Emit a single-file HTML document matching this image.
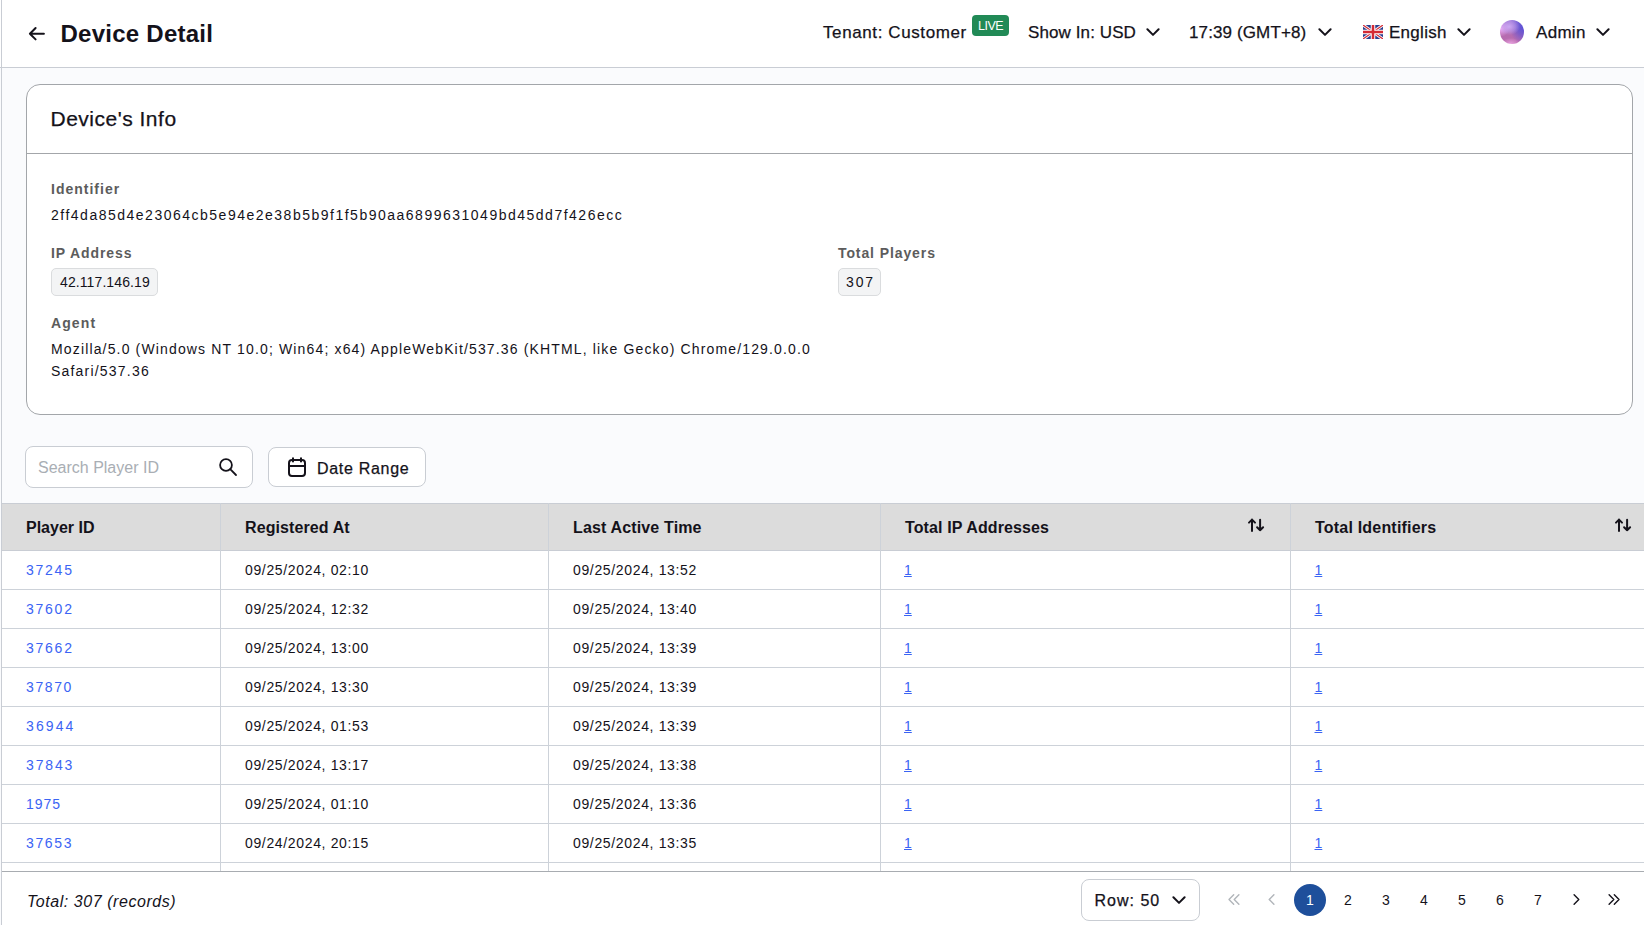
<!DOCTYPE html>
<html><head><meta charset="utf-8"><title>Device Detail</title>
<style>
html,body{margin:0;padding:0;width:1644px;height:925px;overflow:hidden;background:#fff;position:relative}
.t{position:absolute;white-space:nowrap;line-height:1;font-family:"Liberation Sans",sans-serif}
svg{display:block}
</style></head><body>
<div style="position:absolute;left:0px;top:0px;width:1644px;height:67px;background:#fff"></div>
<div style="position:absolute;left:0px;top:67px;width:1644px;height:1px;background:#c9cdd4"></div>
<svg style="position:absolute;left:27px;top:25px" width="20" height="18" viewBox="0 0 20 18"><path d="M16.9 8.7 H2.9 M8.6 3 L2.9 8.7 L8.6 14.4" fill="none" stroke="#14121a" stroke-width="2" stroke-linecap="round" stroke-linejoin="round"/></svg>
<div class="t" style="left:60.5px;top:21.68px;font-size:24px;font-weight:bold;color:#14121a;letter-spacing:0.25px;font-style:normal;">Device Detail</div>
<div class="t" style="left:823px;top:23.61px;font-size:17px;font-weight:normal;color:#14121a;letter-spacing:0.6px;font-style:normal;-webkit-text-stroke:0.25px currentColor;">Tenant: Customer</div>
<div style="position:absolute;left:972px;top:15px;width:37px;height:21px;background:#218a56;border-radius:4px"></div>
<div class="t" style="left:978px;top:20.42px;font-size:12.5px;font-weight:normal;color:#fff;letter-spacing:-0.5px;font-style:normal;">LIVE</div>
<div class="t" style="left:1028px;top:23.61px;font-size:17px;font-weight:normal;color:#14121a;letter-spacing:0.1px;font-style:normal;-webkit-text-stroke:0.25px currentColor;">Show In: USD</div>
<svg style="position:absolute;left:1146px;top:28px" width="14" height="9" viewBox="0 0 14 9"><path d="M1.4 1.3 L7 6.9 L12.6 1.3" fill="none" stroke="#14121a" stroke-width="2" stroke-linecap="round" stroke-linejoin="round"/></svg>
<div class="t" style="left:1189px;top:23.61px;font-size:17px;font-weight:normal;color:#14121a;letter-spacing:0.12px;font-style:normal;-webkit-text-stroke:0.25px currentColor;">17:39 (GMT+8)</div>
<svg style="position:absolute;left:1318px;top:28px" width="14" height="9" viewBox="0 0 14 9"><path d="M1.4 1.3 L7 6.9 L12.6 1.3" fill="none" stroke="#14121a" stroke-width="2" stroke-linecap="round" stroke-linejoin="round"/></svg>
<svg style="position:absolute;left:1363px;top:25px" width="20" height="14" viewBox="0 0 20 14"><rect width="20" height="14" fill="#2a3f8f"/>
<path d="M0 0 L20 14 M20 0 L0 14" stroke="#fff" stroke-width="3"/>
<path d="M0 0 L20 14 M20 0 L0 14" stroke="#d42a34" stroke-width="1.2"/>
<path d="M10 0 V14 M0 7 H20" stroke="#fff" stroke-width="4.5"/>
<path d="M10 0 V14 M0 7 H20" stroke="#d42a34" stroke-width="2.5"/></svg>
<div class="t" style="left:1389px;top:23.61px;font-size:17px;font-weight:normal;color:#14121a;letter-spacing:0.28px;font-style:normal;-webkit-text-stroke:0.25px currentColor;">English</div>
<svg style="position:absolute;left:1457px;top:28px" width="14" height="9" viewBox="0 0 14 9"><path d="M1.4 1.3 L7 6.9 L12.6 1.3" fill="none" stroke="#14121a" stroke-width="2" stroke-linecap="round" stroke-linejoin="round"/></svg>
<div style="position:absolute;left:1500px;top:20px;width:24px;height:24px;border-radius:50%;background:radial-gradient(ellipse 45% 35% at 38% 28%, rgba(205,170,245,0.95) 0%, rgba(195,160,240,0.5) 60%, transparent 100%), radial-gradient(circle at 5% 35%, #f4b0f6 0, rgba(244,176,246,0) 30%), radial-gradient(ellipse 60% 70% at 100% 30%, #5850d8 0%, rgba(88,80,216,0.6) 50%, rgba(88,80,216,0) 100%), radial-gradient(ellipse 40% 25% at 45% 100%, #e8a4e0 0%, rgba(232,164,224,0) 100%), linear-gradient(180deg, #9c78d8 0%, #b46cb0 55%, #bc6cb0 100%)"></div>
<div class="t" style="left:1536px;top:23.61px;font-size:17px;font-weight:normal;color:#14121a;letter-spacing:0.3px;font-style:normal;-webkit-text-stroke:0.25px currentColor;">Admin</div>
<svg style="position:absolute;left:1596px;top:28px" width="14" height="9" viewBox="0 0 14 9"><path d="M1.4 1.3 L7 6.9 L12.6 1.3" fill="none" stroke="#14121a" stroke-width="2" stroke-linecap="round" stroke-linejoin="round"/></svg>
<div style="position:absolute;left:0px;top:68px;width:1644px;height:857px;background:#fafbfd"></div>
<div style="position:absolute;left:1px;top:0px;width:1px;height:925px;background:#c9cdd4"></div>
<div style="position:absolute;left:26px;top:84px;width:1607px;height:331px;box-sizing:border-box;border:1px solid #a3a6aa;border-radius:14px;background:#fff"></div>
<div style="position:absolute;left:27px;top:153px;width:1605px;height:1px;background:#a3a6aa"></div>
<div class="t" style="left:50.5px;top:108.22px;font-size:21px;font-weight:normal;color:#14121a;letter-spacing:0.5px;font-style:normal;-webkit-text-stroke:0.25px currentColor;">Device's Info</div>
<div class="t" style="left:51px;top:182.15px;font-size:14px;font-weight:bold;color:#5c5c5c;letter-spacing:1.0px;font-style:normal;">Identifier</div>
<div class="t" style="left:51px;top:208.15px;font-size:14px;font-weight:normal;color:#14121a;letter-spacing:1.5px;font-style:normal;">2ff4da85d4e23064cb5e94e2e38b5b9f1f5b90aa6899631049bd45dd7f426ecc</div>
<div class="t" style="left:51px;top:246.15px;font-size:14px;font-weight:bold;color:#5c5c5c;letter-spacing:0.9px;font-style:normal;">IP Address</div>
<div style="position:absolute;left:51px;top:268px;width:107px;height:28px;box-sizing:border-box;border:1px solid #dadcde;border-radius:5px;background:#f3f4f5"></div>
<div class="t" style="left:60px;top:275.15px;font-size:14px;font-weight:normal;color:#14121a;letter-spacing:0.1px;font-style:normal;">42.117.146.19</div>
<div class="t" style="left:838px;top:246.15px;font-size:14px;font-weight:bold;color:#5c5c5c;letter-spacing:0.9px;font-style:normal;">Total Players</div>
<div style="position:absolute;left:838px;top:268px;width:43px;height:28px;box-sizing:border-box;border:1px solid #dadcde;border-radius:5px;background:#f3f4f5"></div>
<div class="t" style="left:846px;top:275.15px;font-size:14px;font-weight:normal;color:#14121a;letter-spacing:1.9px;font-style:normal;">307</div>
<div class="t" style="left:51px;top:316.15px;font-size:14px;font-weight:bold;color:#5c5c5c;letter-spacing:1.1px;font-style:normal;">Agent</div>
<div class="t" style="left:51px;top:342.15px;font-size:14px;font-weight:normal;color:#14121a;letter-spacing:1.15px;font-style:normal;">Mozilla/5.0 (Windows NT 10.0; Win64; x64) AppleWebKit/537.36 (KHTML, like Gecko) Chrome/129.0.0.0</div>
<div class="t" style="left:51px;top:364.15px;font-size:14px;font-weight:normal;color:#14121a;letter-spacing:1.2px;font-style:normal;">Safari/537.36</div>
<div style="position:absolute;left:25px;top:446px;width:228px;height:42px;box-sizing:border-box;border:1px solid #c9cdd3;border-radius:8px;background:#fff"></div>
<div class="t" style="left:38px;top:459.96px;font-size:16px;font-weight:normal;color:#a9aeb4;letter-spacing:0px;font-style:normal;">Search Player ID</div>
<svg style="position:absolute;left:217px;top:456px" width="22" height="22" viewBox="0 0 22 22"><circle cx="9" cy="9" r="5.9" fill="none" stroke="#14121a" stroke-width="1.8"/><path d="M13.2 13.2 L19 19" stroke="#14121a" stroke-width="1.8" stroke-linecap="round"/></svg>
<div style="position:absolute;left:268px;top:447px;width:158px;height:40px;box-sizing:border-box;border:1px solid #c9cdd3;border-radius:8px;background:#fff"></div>
<svg style="position:absolute;left:286px;top:455px" width="22" height="24" viewBox="0 0 22 24"><rect x="3" y="5" width="16" height="16" rx="3" fill="none" stroke="#14121a" stroke-width="2"/><path d="M3 11 H19 M7 3.2 V6.5 M15 3.2 V6.5" stroke="#14121a" stroke-width="2" stroke-linecap="round"/></svg>
<div class="t" style="left:317px;top:460.96px;font-size:16px;font-weight:normal;color:#14121a;letter-spacing:0.7px;font-style:normal;-webkit-text-stroke:0.25px currentColor;">Date Range</div>
<div style="position:absolute;left:2px;top:503px;width:1642px;height:47px;background:#dcdcdc"></div>
<div style="position:absolute;left:2px;top:503px;width:1642px;height:1px;background:#c9cdd4"></div>
<div style="position:absolute;left:2px;top:550px;width:1642px;height:1px;background:#c9cdd4"></div>
<div style="position:absolute;left:220px;top:503px;width:1px;height:368px;background:#cdd2d9"></div>
<div style="position:absolute;left:548px;top:503px;width:1px;height:368px;background:#cdd2d9"></div>
<div style="position:absolute;left:880px;top:503px;width:1px;height:368px;background:#cdd2d9"></div>
<div style="position:absolute;left:1290px;top:503px;width:1px;height:368px;background:#cdd2d9"></div>
<div class="t" style="left:26px;top:520.46px;font-size:16px;font-weight:bold;color:#14121a;letter-spacing:0px;font-style:normal;">Player ID</div>
<div class="t" style="left:245px;top:520.46px;font-size:16px;font-weight:bold;color:#14121a;letter-spacing:0.1px;font-style:normal;">Registered At</div>
<div class="t" style="left:573px;top:520.46px;font-size:16px;font-weight:bold;color:#14121a;letter-spacing:0.15px;font-style:normal;">Last Active Time</div>
<div class="t" style="left:905px;top:520.46px;font-size:16px;font-weight:bold;color:#14121a;letter-spacing:0.12px;font-style:normal;">Total IP Addresses</div>
<div class="t" style="left:1315px;top:520.46px;font-size:16px;font-weight:bold;color:#14121a;letter-spacing:0.2px;font-style:normal;">Total Identifiers</div>
<svg style="position:absolute;left:1247px;top:517.5px" width="18" height="15" viewBox="0 0 18 15"><path d="M5 12.9 V1.6 M2 4.6 L5 1.6 L8 4.6 M13.1 1.8 V12.3 M10.1 9.3 L13.1 12.3 L16.1 9.3" fill="none" stroke="#14121a" stroke-width="2" stroke-linecap="round" stroke-linejoin="round"/></svg>
<svg style="position:absolute;left:1614px;top:517.5px" width="18" height="15" viewBox="0 0 18 15"><path d="M5 12.9 V1.6 M2 4.6 L5 1.6 L8 4.6 M13.1 1.8 V12.3 M10.1 9.3 L13.1 12.3 L16.1 9.3" fill="none" stroke="#14121a" stroke-width="2" stroke-linecap="round" stroke-linejoin="round"/></svg>
<div style="position:absolute;left:2px;top:551px;width:1642px;height:38px;background:#fff"></div>
<div style="position:absolute;left:2px;top:589px;width:1642px;height:1px;background:#cdd2d9"></div>
<div class="t" style="left:26px;top:563.15px;font-size:14px;font-weight:normal;color:#3b64f4;letter-spacing:1.75px;font-style:normal;">37245</div>
<div class="t" style="left:245px;top:563.15px;font-size:14px;font-weight:normal;color:#14121a;letter-spacing:0.65px;font-style:normal;">09/25/2024, 02:10</div>
<div class="t" style="left:573px;top:563.15px;font-size:14px;font-weight:normal;color:#14121a;letter-spacing:0.65px;font-style:normal;">09/25/2024, 13:52</div>
<div class="t" style="left:904px;top:563.15px;font-size:14px;font-weight:normal;color:#3b64f4;letter-spacing:0px;font-style:normal;text-decoration:underline;">1</div>
<div class="t" style="left:1314.5px;top:563.15px;font-size:14px;font-weight:normal;color:#3b64f4;letter-spacing:0px;font-style:normal;text-decoration:underline;">1</div>
<div style="position:absolute;left:2px;top:590px;width:1642px;height:38px;background:#fff"></div>
<div style="position:absolute;left:2px;top:628px;width:1642px;height:1px;background:#cdd2d9"></div>
<div class="t" style="left:26px;top:602.15px;font-size:14px;font-weight:normal;color:#3b64f4;letter-spacing:1.75px;font-style:normal;">37602</div>
<div class="t" style="left:245px;top:602.15px;font-size:14px;font-weight:normal;color:#14121a;letter-spacing:0.65px;font-style:normal;">09/25/2024, 12:32</div>
<div class="t" style="left:573px;top:602.15px;font-size:14px;font-weight:normal;color:#14121a;letter-spacing:0.65px;font-style:normal;">09/25/2024, 13:40</div>
<div class="t" style="left:904px;top:602.15px;font-size:14px;font-weight:normal;color:#3b64f4;letter-spacing:0px;font-style:normal;text-decoration:underline;">1</div>
<div class="t" style="left:1314.5px;top:602.15px;font-size:14px;font-weight:normal;color:#3b64f4;letter-spacing:0px;font-style:normal;text-decoration:underline;">1</div>
<div style="position:absolute;left:2px;top:629px;width:1642px;height:38px;background:#fff"></div>
<div style="position:absolute;left:2px;top:667px;width:1642px;height:1px;background:#cdd2d9"></div>
<div class="t" style="left:26px;top:641.15px;font-size:14px;font-weight:normal;color:#3b64f4;letter-spacing:1.75px;font-style:normal;">37662</div>
<div class="t" style="left:245px;top:641.15px;font-size:14px;font-weight:normal;color:#14121a;letter-spacing:0.65px;font-style:normal;">09/25/2024, 13:00</div>
<div class="t" style="left:573px;top:641.15px;font-size:14px;font-weight:normal;color:#14121a;letter-spacing:0.65px;font-style:normal;">09/25/2024, 13:39</div>
<div class="t" style="left:904px;top:641.15px;font-size:14px;font-weight:normal;color:#3b64f4;letter-spacing:0px;font-style:normal;text-decoration:underline;">1</div>
<div class="t" style="left:1314.5px;top:641.15px;font-size:14px;font-weight:normal;color:#3b64f4;letter-spacing:0px;font-style:normal;text-decoration:underline;">1</div>
<div style="position:absolute;left:2px;top:668px;width:1642px;height:38px;background:#fff"></div>
<div style="position:absolute;left:2px;top:706px;width:1642px;height:1px;background:#cdd2d9"></div>
<div class="t" style="left:26px;top:680.15px;font-size:14px;font-weight:normal;color:#3b64f4;letter-spacing:1.6px;font-style:normal;">37870</div>
<div class="t" style="left:245px;top:680.15px;font-size:14px;font-weight:normal;color:#14121a;letter-spacing:0.65px;font-style:normal;">09/25/2024, 13:30</div>
<div class="t" style="left:573px;top:680.15px;font-size:14px;font-weight:normal;color:#14121a;letter-spacing:0.65px;font-style:normal;">09/25/2024, 13:39</div>
<div class="t" style="left:904px;top:680.15px;font-size:14px;font-weight:normal;color:#3b64f4;letter-spacing:0px;font-style:normal;text-decoration:underline;">1</div>
<div class="t" style="left:1314.5px;top:680.15px;font-size:14px;font-weight:normal;color:#3b64f4;letter-spacing:0px;font-style:normal;text-decoration:underline;">1</div>
<div style="position:absolute;left:2px;top:707px;width:1642px;height:38px;background:#fff"></div>
<div style="position:absolute;left:2px;top:745px;width:1642px;height:1px;background:#cdd2d9"></div>
<div class="t" style="left:26px;top:719.15px;font-size:14px;font-weight:normal;color:#3b64f4;letter-spacing:2.1px;font-style:normal;">36944</div>
<div class="t" style="left:245px;top:719.15px;font-size:14px;font-weight:normal;color:#14121a;letter-spacing:0.65px;font-style:normal;">09/25/2024, 01:53</div>
<div class="t" style="left:573px;top:719.15px;font-size:14px;font-weight:normal;color:#14121a;letter-spacing:0.65px;font-style:normal;">09/25/2024, 13:39</div>
<div class="t" style="left:904px;top:719.15px;font-size:14px;font-weight:normal;color:#3b64f4;letter-spacing:0px;font-style:normal;text-decoration:underline;">1</div>
<div class="t" style="left:1314.5px;top:719.15px;font-size:14px;font-weight:normal;color:#3b64f4;letter-spacing:0px;font-style:normal;text-decoration:underline;">1</div>
<div style="position:absolute;left:2px;top:746px;width:1642px;height:38px;background:#fff"></div>
<div style="position:absolute;left:2px;top:784px;width:1642px;height:1px;background:#cdd2d9"></div>
<div class="t" style="left:26px;top:758.15px;font-size:14px;font-weight:normal;color:#3b64f4;letter-spacing:1.85px;font-style:normal;">37843</div>
<div class="t" style="left:245px;top:758.15px;font-size:14px;font-weight:normal;color:#14121a;letter-spacing:0.65px;font-style:normal;">09/25/2024, 13:17</div>
<div class="t" style="left:573px;top:758.15px;font-size:14px;font-weight:normal;color:#14121a;letter-spacing:0.65px;font-style:normal;">09/25/2024, 13:38</div>
<div class="t" style="left:904px;top:758.15px;font-size:14px;font-weight:normal;color:#3b64f4;letter-spacing:0px;font-style:normal;text-decoration:underline;">1</div>
<div class="t" style="left:1314.5px;top:758.15px;font-size:14px;font-weight:normal;color:#3b64f4;letter-spacing:0px;font-style:normal;text-decoration:underline;">1</div>
<div style="position:absolute;left:2px;top:785px;width:1642px;height:38px;background:#fff"></div>
<div style="position:absolute;left:2px;top:823px;width:1642px;height:1px;background:#cdd2d9"></div>
<div class="t" style="left:26px;top:797.15px;font-size:14px;font-weight:normal;color:#3b64f4;letter-spacing:1.0px;font-style:normal;">1975</div>
<div class="t" style="left:245px;top:797.15px;font-size:14px;font-weight:normal;color:#14121a;letter-spacing:0.65px;font-style:normal;">09/25/2024, 01:10</div>
<div class="t" style="left:573px;top:797.15px;font-size:14px;font-weight:normal;color:#14121a;letter-spacing:0.65px;font-style:normal;">09/25/2024, 13:36</div>
<div class="t" style="left:904px;top:797.15px;font-size:14px;font-weight:normal;color:#3b64f4;letter-spacing:0px;font-style:normal;text-decoration:underline;">1</div>
<div class="t" style="left:1314.5px;top:797.15px;font-size:14px;font-weight:normal;color:#3b64f4;letter-spacing:0px;font-style:normal;text-decoration:underline;">1</div>
<div style="position:absolute;left:2px;top:824px;width:1642px;height:38px;background:#fff"></div>
<div style="position:absolute;left:2px;top:862px;width:1642px;height:1px;background:#cdd2d9"></div>
<div class="t" style="left:26px;top:836.15px;font-size:14px;font-weight:normal;color:#3b64f4;letter-spacing:1.65px;font-style:normal;">37653</div>
<div class="t" style="left:245px;top:836.15px;font-size:14px;font-weight:normal;color:#14121a;letter-spacing:0.65px;font-style:normal;">09/24/2024, 20:15</div>
<div class="t" style="left:573px;top:836.15px;font-size:14px;font-weight:normal;color:#14121a;letter-spacing:0.65px;font-style:normal;">09/25/2024, 13:35</div>
<div class="t" style="left:904px;top:836.15px;font-size:14px;font-weight:normal;color:#3b64f4;letter-spacing:0px;font-style:normal;text-decoration:underline;">1</div>
<div class="t" style="left:1314.5px;top:836.15px;font-size:14px;font-weight:normal;color:#3b64f4;letter-spacing:0px;font-style:normal;text-decoration:underline;">1</div>
<div style="position:absolute;left:2px;top:863px;width:1642px;height:8px;background:#fff"></div>
<div style="position:absolute;left:220px;top:503px;width:1px;height:368px;background:#cdd2d9"></div>
<div style="position:absolute;left:548px;top:503px;width:1px;height:368px;background:#cdd2d9"></div>
<div style="position:absolute;left:880px;top:503px;width:1px;height:368px;background:#cdd2d9"></div>
<div style="position:absolute;left:1290px;top:503px;width:1px;height:368px;background:#cdd2d9"></div>
<div style="position:absolute;left:2px;top:871px;width:1642px;height:54px;background:#fff"></div>
<div style="position:absolute;left:2px;top:871px;width:1642px;height:1px;background:#a8acb1"></div>
<div class="t" style="left:27px;top:893.96px;font-size:16px;font-weight:normal;color:#14121a;letter-spacing:0.55px;font-style:italic;">Total: 307 (records)</div>
<div style="position:absolute;left:1081px;top:879px;width:119px;height:42px;box-sizing:border-box;border:1px solid #c9cdd3;border-radius:8px;background:#fff"></div>
<div class="t" style="left:1094.5px;top:893.46px;font-size:16px;font-weight:normal;color:#14121a;letter-spacing:1.0px;font-style:normal;-webkit-text-stroke:0.25px currentColor;">Row: 50</div>
<svg style="position:absolute;left:1172px;top:896px" width="14" height="9" viewBox="0 0 14 9"><path d="M1.4 1.3 L7 6.9 L12.6 1.3" fill="none" stroke="#14121a" stroke-width="2" stroke-linecap="round" stroke-linejoin="round"/></svg>
<svg style="position:absolute;left:1226px;top:892px" width="16" height="16" viewBox="0 0 16 16"><path d="M7.7 2.8 L3 7.5 L7.7 12.2 M12.9 2.8 L8.2 7.5 L12.9 12.2" fill="none" stroke="#b1b5ba" stroke-width="1.4" stroke-linecap="round" stroke-linejoin="round"/></svg>
<svg style="position:absolute;left:1264px;top:892px" width="16" height="16" viewBox="0 0 16 16"><path d="M9.9 2.8 L5.2 7.5 L9.9 12.2" fill="none" stroke="#b1b5ba" stroke-width="1.4" stroke-linecap="round" stroke-linejoin="round"/></svg>
<div style="position:absolute;left:1294px;top:884px;width:32px;height:32px;border-radius:50%;background:#1e4f9b"></div>
<div class="t" style="left:1306px;top:893.15px;font-size:14px;font-weight:normal;color:#fff;letter-spacing:0px;font-style:normal;">1</div>
<div class="t" style="left:1344px;top:893.15px;font-size:14px;font-weight:normal;color:#14121a;letter-spacing:0px;font-style:normal;">2</div>
<div class="t" style="left:1382px;top:893.15px;font-size:14px;font-weight:normal;color:#14121a;letter-spacing:0px;font-style:normal;">3</div>
<div class="t" style="left:1420px;top:893.15px;font-size:14px;font-weight:normal;color:#14121a;letter-spacing:0px;font-style:normal;">4</div>
<div class="t" style="left:1458px;top:893.15px;font-size:14px;font-weight:normal;color:#14121a;letter-spacing:0px;font-style:normal;">5</div>
<div class="t" style="left:1496px;top:893.15px;font-size:14px;font-weight:normal;color:#14121a;letter-spacing:0px;font-style:normal;">6</div>
<div class="t" style="left:1534px;top:893.15px;font-size:14px;font-weight:normal;color:#14121a;letter-spacing:0px;font-style:normal;">7</div>
<svg style="position:absolute;left:1568px;top:892px" width="16" height="16" viewBox="0 0 16 16"><path d="M6.1 2.8 L10.8 7.5 L6.1 12.2" fill="none" stroke="#14121a" stroke-width="1.4" stroke-linecap="round" stroke-linejoin="round"/></svg>
<svg style="position:absolute;left:1606px;top:892px" width="16" height="16" viewBox="0 0 16 16"><path d="M3.1 2.8 L7.8 7.5 L3.1 12.2 M8.3 2.8 L13 7.5 L8.3 12.2" fill="none" stroke="#14121a" stroke-width="1.4" stroke-linecap="round" stroke-linejoin="round"/></svg>
</body></html>
